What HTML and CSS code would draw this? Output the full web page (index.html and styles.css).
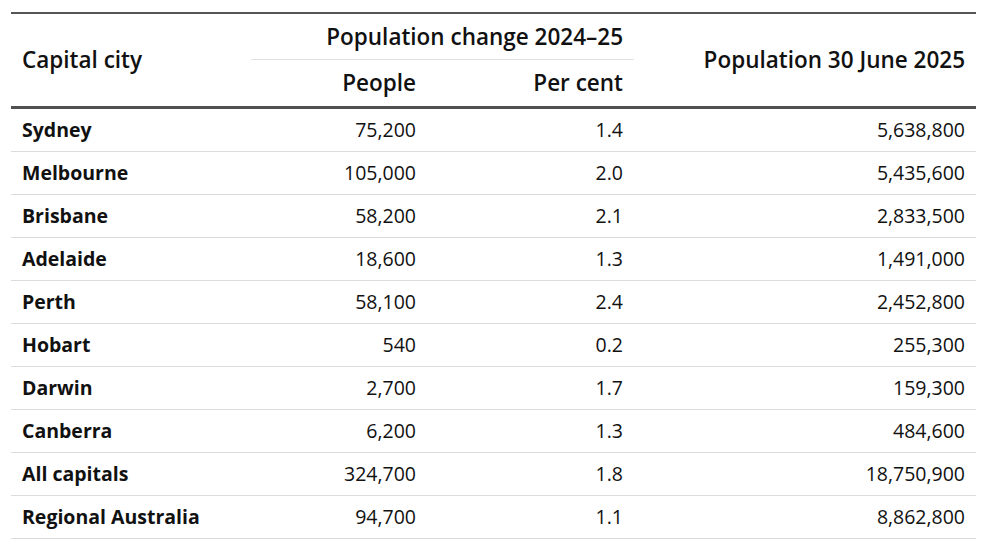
FILE: index.html
```html
<!DOCTYPE html>
<html lang="en">
<head>
<meta charset="utf-8">
<title>Capital city population change</title>
<link rel="stylesheet" href="styles.css">
</head>
<body>
<table class="pop-table">
  <colgroup>
    <col class="c-city">
    <col class="c-people">
    <col class="c-pct">
    <col class="c-pop">
  </colgroup>
  <thead>
    <tr class="head-top">
      <th rowspan="2" class="th-city">Capital city</th>
      <th colspan="2" class="th-group">Population change 2024–25</th>
      <th rowspan="2" class="th-num th-pop">Population 30 June 2025</th>
    </tr>
    <tr class="head-sub">
      <th class="th-num">People</th>
      <th class="th-num">Per cent</th>
    </tr>
  </thead>
  <tbody>
    <tr><th class="row-name">Sydney</th><td>75,200</td><td>1.4</td><td>5,638,800</td></tr>
    <tr><th class="row-name">Melbourne</th><td>105,000</td><td>2.0</td><td>5,435,600</td></tr>
    <tr><th class="row-name">Brisbane</th><td>58,200</td><td>2.1</td><td>2,833,500</td></tr>
    <tr><th class="row-name">Adelaide</th><td>18,600</td><td>1.3</td><td>1,491,000</td></tr>
    <tr><th class="row-name">Perth</th><td>58,100</td><td>2.4</td><td>2,452,800</td></tr>
    <tr><th class="row-name">Hobart</th><td>540</td><td>0.2</td><td>255,300</td></tr>
    <tr><th class="row-name">Darwin</th><td>2,700</td><td>1.7</td><td>159,300</td></tr>
    <tr><th class="row-name">Canberra</th><td>6,200</td><td>1.3</td><td>484,600</td></tr>
    <tr><th class="row-name">All capitals</th><td>324,700</td><td>1.8</td><td>18,750,900</td></tr>
    <tr><th class="row-name">Regional Australia</th><td>94,700</td><td>1.1</td><td>8,862,800</td></tr>
  </tbody>
</table>
</body>
</html>
```
FILE: styles.css
```css
html, body {
  margin: 0;
  padding: 0;
  background: #ffffff;
}

body {
  padding: 12px 0 0 11px;
  font-family: "Open Sans", "Noto Sans", sans-serif;
  color: #111111;
}

.pop-table {
  border-collapse: collapse;
  width: 965px;
  table-layout: fixed;
  font-size: 19.5px;
  line-height: 26px;
  border-top: 2px solid #555555;
}

.c-city { width: 240px; }
.c-people { width: 176px; }
.c-pct { width: 207px; }
.c-pop { width: 342px; }

th, td {
  padding: 0 11px;
  vertical-align: middle;
}

thead th {
  font-weight: 600;
  font-size: 22.5px;
  line-height: 28px;
}

.head-top th {
  height: 45px;
}

.head-sub th {
  height: 46px;
  border-bottom: 3px solid #505050;
}

.th-city {
  text-align: left;
  border-bottom: 3px solid #505050;
}

.th-pop {
  border-bottom: 3px solid #505050;
}

.th-group {
  text-align: right;
  border-bottom: 1px solid #e2e2e2;
}

.th-num {
  text-align: right;
}

tbody th,
tbody td {
  height: 42px;
  border-bottom: 1px solid #dcdcdc;
}

.row-name {
  text-align: left;
  font-weight: 700;
}

tbody td {
  text-align: right;
  font-weight: 400;
}
```
